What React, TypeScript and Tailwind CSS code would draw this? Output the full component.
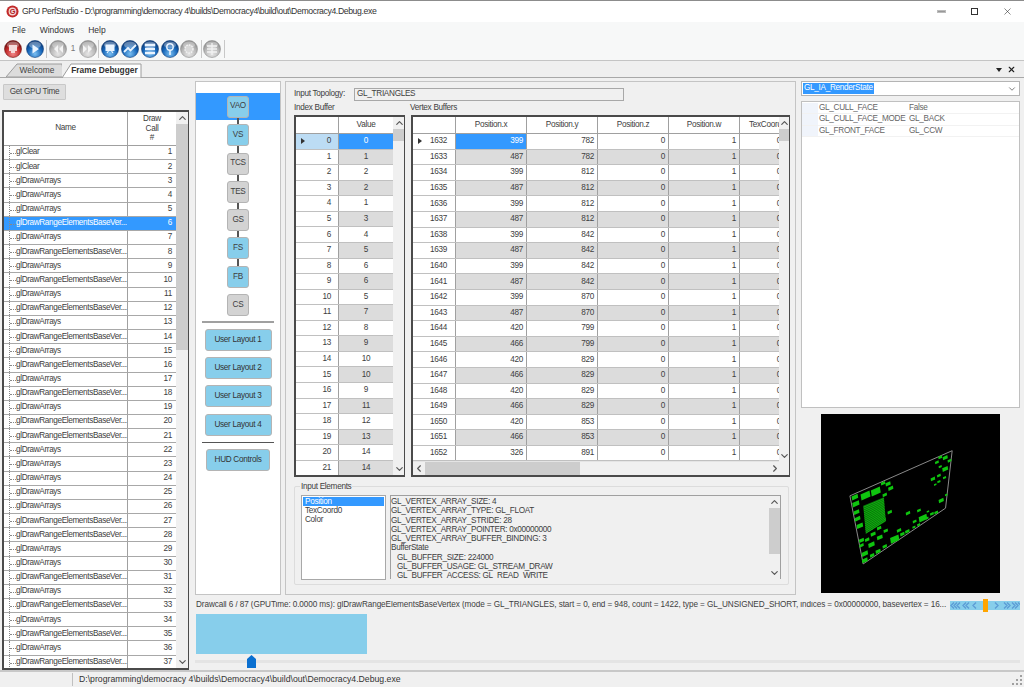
import React from "react";
import { ChevronUp, ChevronDown, ChevronLeft, ChevronRight, X } from "lucide-react";

const DA = "glDrawArrays";
const RE = "glDrawRangeElementsBaseVer...";
const calls = ["glClear","glClear",DA,DA,DA,RE,DA,RE,DA,RE,DA,RE,DA,RE,DA,RE,DA,RE,DA,RE,RE,DA,DA,DA,DA,DA,RE,RE,DA,DA,RE,DA,RE,DA,RE,DA,RE];
const indexValues = [0,1,2,2,1,3,4,5,6,6,5,7,8,9,10,10,9,11,12,13,14,14];
const vertices: [number, number, number][] = [
  [1632,399,782],[1633,487,782],[1634,399,812],[1635,487,812],[1636,399,812],[1637,487,812],[1638,399,842],
  [1639,487,842],[1640,399,842],[1641,487,842],[1642,399,870],[1643,487,870],[1644,420,799],[1645,466,799],
  [1646,420,829],[1647,466,829],[1648,420,829],[1649,466,829],[1650,420,853],[1651,466,853],[1652,326,891],
];
const pipeline: [string, boolean][] = [["VS",true],["TCS",false],["TES",false],["GS",false],["FS",true],["FB",true]];
const dots: [number, number, number][] = [
  [135,262,10],[138,282,11],[140,307,9],[143,327,9],[150,348,10],[220,220,7],[235,222,8],[243,235,8],[225,255,7],
  [240,307,7],[222,330,7],[208,355,7],[228,363,7],[190,373,8],[210,383,9],[172,390,7],[155,392,8],[155,407,7],
  [185,405,10],[225,410,7],[205,425,8],[187,437,7],[165,432,10],[165,452,9],[255,388,14],[268,362,7],[278,373,7],
  [293,365,7],[295,310,7],[328,302,6],[315,335,6],[313,352,5],[327,345,5],[340,325,13],[355,305,4],[352,325,5],
  [367,312,6],[380,308,6],[395,272,8],[410,255,4],[382,157,6],[392,142,6],[407,143,8],[420,152,6],[392,170,5],
  [407,177,9],[370,207,7],[388,197,6],[405,203,5],[388,215,5],[377,224,4],[178,357,11],[167,257,15],[198,245,15],
];

function Globe({ id, tone, children }: { id: string; tone: "red" | "blue" | "gray"; children?: React.ReactNode }) {
  const c = {
    red: ["#f08a8a", "#c42c2c", "#6d0f0f"],
    blue: ["#7cc0f2", "#1565b8", "#0b3a78"],
    gray: ["#e6e6e6", "#b9b9b9", "#8d8d8d"],
  }[tone];
  return (
    <svg viewBox="0 0 18 18" className="w-[18px] h-[18px] shrink-0">
      <defs>
        <radialGradient id={id} cx="50%" cy="78%" r="70%">
          <stop offset="0%" stopColor={c[0]} />
          <stop offset="60%" stopColor={c[1]} />
          <stop offset="100%" stopColor={c[2]} />
        </radialGradient>
      </defs>
      <circle cx="9" cy="9" r="8.5" fill={`url(#${id})`} stroke={c[2]} strokeWidth="0.6" />
      <ellipse cx="9" cy="5" rx="6" ry="3.4" fill="#ffffff" opacity="0.35" />
      {children}
    </svg>
  );
}

function Sep({ className }: { className: string }) {
  return <div className={`w-px h-[18px] bg-[#c8c8c8] shrink-0 ${className}`} />;
}

function VScroll({ thumbHeight, className }: { thumbHeight: number; className: string }) {
  return (
    <div className={`flex flex-col items-center bg-[#f0f0f0] shrink-0 ${className}`}>
      <ChevronUp className="w-[11px] h-[12px] text-[#555] shrink-0" strokeWidth={2.5} />
      <div className="flex-1 w-full">
        <div className="w-full bg-[#cdcdcd]" style={{ height: thumbHeight }} />
      </div>
      <ChevronDown className="w-[11px] h-[12px] text-[#555] shrink-0" strokeWidth={2.5} />
    </div>
  );
}

function Pipe({ label, on, line = true }: { label: string; on: boolean; line?: boolean }) {
  return (
    <div className="flex flex-col items-center">
      {line && <div className="w-[2px] h-[6.3px] bg-[#555]" />}
      <div className={`w-[22px] h-[22px] rounded-[3px] border border-[#b4b4b4] flex items-center justify-center text-[#404040] ${on ? "bg-[#87ceeb]" : "bg-[#d3d3d3]"}`}>{label}</div>
    </div>
  );
}

function LayoutBtn({ label, w = "w-[67px]" }: { label: string; w?: string }) {
  return (
    <div className={`${w} h-[22px] rounded-[3px] border border-[#b4b4b4] bg-[#87ceeb] flex items-center justify-center text-[#333]`}>{label}</div>
  );
}

export default function App() {
  return (
    <div className="w-[1024px] h-[687px] overflow-hidden flex flex-col bg-[#f0f0f0] text-[#404040] text-[8.2px] tracking-[-0.3px] leading-none font-['Liberation_Sans',Arial,sans-serif]">
      {/* Title bar */}
      <div className="h-[22px] bg-white flex items-center shrink-0 border-t border-[#8c8c8c]">
        <svg viewBox="0 0 14 14" className="w-[13px] h-[13px] ml-[6px] mr-[3px]">
          <circle cx="7" cy="7" r="6.5" fill="#c22a2a" />
          <circle cx="7" cy="7" r="4.2" fill="#f3d5d5" />
          <text x="7" y="10" textAnchor="middle" fontSize="8" fontWeight="700" fill="#b02020" fontFamily="Liberation Sans">G</text>
        </svg>
        <span className="text-[8.7px] tracking-[-0.4px] text-[#333] whitespace-nowrap">GPU PerfStudio - D:\programming\democracy 4\builds\Democracy4\build\out\Democracy4.Debug.exe</span>
        <div className="ml-auto flex items-center text-[#222]">
          <div className="w-[33px] flex justify-center"><div className="w-[7px] h-px bg-[#999] outline outline-[0.5px] outline-[#bbb]" /></div>
          <div className="w-[33px] flex justify-center"><div className="w-[7px] h-[7px] border border-[#333]" /></div>
          <div className="w-[33px] flex justify-center"><X className="w-[11px] h-[11px]" strokeWidth={1.2} /></div>
        </div>
      </div>
      {/* Menu */}
      <div className="h-[16px] bg-[#f7f8f8] flex items-center gap-[14px] pl-[12px] text-[8.5px] tracking-normal text-[#333] shrink-0">
        <span>File</span><span>Windows</span><span>Help</span>
      </div>
      {/* Toolbar */}
      <div className="h-[23px] flex shrink-0 bg-[#f7f8f8] border-b border-[#c4c4c4]">
        <div className="flex items-center pl-[4px]">
          <Globe id="g1" tone="red"><rect x="5" y="5" width="8" height="6" fill="#f4dada" /><rect x="7" y="11" width="4" height="2" fill="#f4dada" /></Globe>
          <div className="w-[4px]" />
          <Globe id="g2" tone="blue"><path d="M6.5 4.5 L13 9 L6.5 13.5 Z" fill="#eaf4ff" /></Globe>
          <Sep className="ml-[2px] mr-[2px]" />
          <Globe id="g3" tone="gray"><path d="M9 5 L5 9 L9 13 Z M14 5 L10 9 L14 13 Z" fill="#f4f4f4" /></Globe>
          <span className="w-[12px] text-center text-[#777]">1</span>
          <Globe id="g4" tone="gray"><path d="M4 5 L8 9 L4 13 Z M9 5 L13 9 L9 13 Z" fill="#f4f4f4" /></Globe>
          <Sep className="ml-[1px] mr-[2px]" />
          <Globe id="g5" tone="blue"><rect x="4.5" y="4.5" width="9" height="6.5" fill="#eaf4ff" /><path d="M6 13 L7.5 11 M12 13 L10.5 11" stroke="#eaf4ff" strokeWidth="1.2" /></Globe>
          <div className="w-[2px]" />
          <Globe id="g6" tone="blue"><path d="M3 12 L7 8 L9.5 10.5 L15 5" fill="none" stroke="#eaf4ff" strokeWidth="1.8" /></Globe>
          <div className="w-[2px]" />
          <Globe id="g7" tone="blue"><path d="M4 5 H14 M4 9 H14 M4 13 H14" stroke="#eaf4ff" strokeWidth="2.4" /></Globe>
          <div className="w-[2px]" />
          <Globe id="g8" tone="blue"><circle cx="9" cy="7" r="3.2" fill="none" stroke="#eaf4ff" strokeWidth="1.4" /><path d="M9 10 V15" stroke="#eaf4ff" strokeWidth="1.6" /></Globe>
          <div className="w-[1px]" />
          <Globe id="g9" tone="gray"><circle cx="9" cy="9" r="4" fill="#d8d8d8" stroke="#f2f2f2" strokeWidth="1.4" strokeDasharray="1.6 1" /></Globe>
          <Sep className="ml-[3px] mr-[1px]" />
          <Globe id="g10" tone="gray"><path d="M9 3 V15 M4 6 H14 M4 9 H14 M4 12 H14" stroke="#f2f2f2" strokeWidth="1.3" /></Globe>
          <Sep className="ml-[3px]" />
        </div>
      </div>
      {/* Tabs */}
      <div className="h-[17px] flex items-end pl-[6px] border-b border-[#a8a8a8] shrink-0 bg-[#efefef]">
        <div className="relative w-[56px] h-[14px] flex items-center justify-center pl-[6px]">
          <svg viewBox="0 0 56 14" className="absolute inset-0 w-full h-full" preserveAspectRatio="none">
            <path d="M0 14 L11 1 H56 L58 14 Z" fill="#dcdcdc" stroke="#9c9c9c" />
          </svg>
          <span className="relative text-[8.4px] tracking-normal text-[#444]">Welcome</span>
        </div>
        <div className="relative w-[80px] h-[15px] flex items-center justify-center pl-[5px] -mb-px">
          <svg viewBox="0 0 80 15" className="absolute inset-0 w-full h-full" preserveAspectRatio="none">
            <path d="M0 15 L9 1 H79 V15 Z" fill="#ffffff" stroke="#9c9c9c" />
          </svg>
          <span className="relative text-[8.4px] tracking-normal font-bold text-[#333]">Frame Debugger</span>
        </div>
        <div className="ml-auto flex items-center gap-[5px] pr-[8px] pb-[3px] text-[#222]">
          <div className="w-0 h-0 border-x-[3px] border-x-transparent border-t-[4px] border-t-[#222]" />
          <X className="w-[9px] h-[9px]" strokeWidth={3} />
        </div>
      </div>
      {/* Main */}
      <div className="flex flex-1 min-h-0">
        {/* Left */}
        <div className="w-[195px] shrink-0 flex flex-col">
          <div className="ml-[3px] mt-[6px] w-[63px] h-[16px] bg-[#dedede] border border-[#c8c8c8] rounded-[1px] flex items-center justify-center text-[#444] whitespace-nowrap">Get GPU Time</div>
          <div className="ml-[2px] mt-[10px] w-[187px] h-[560px] border-2 border-[#4a4a4a] border-r-[1px] flex bg-white overflow-hidden">
            <div className="w-[172px] shrink-0 flex flex-col">
              <div className="h-[34px] flex border-b border-[#a0a0a0] shrink-0">
                <div className="w-[124px] flex items-center justify-center border-r border-[#a0a0a0]">Name</div>
                <div className="flex-1 flex items-center justify-center text-center leading-[9.5px]">Draw<br />Call<br />#</div>
              </div>
              {calls.map((name, i) => (
                <div key={i} className={`h-[14.17px] shrink-0 flex border-b border-[#a8a8a8] ${i === 5 ? "bg-[#3399ff] text-white" : ""}`}>
                  <div className={`w-[124px] flex items-center pl-[12px] relative border-r whitespace-nowrap tracking-[-0.36px] overflow-hidden ${i === 5 ? "border-[#3399ff]" : "border-[#a0a0a0]"}`}>
                    <span className="absolute left-[5px] top-0 bottom-0 border-l border-dotted border-[#888]" />
                    <span className="absolute left-[6px] w-[6px] top-[7px] border-t border-dotted border-[#888]" />
                    {name}
                  </div>
                  <div className="flex-1 flex items-center justify-end pr-[4px]">{i + 1}</div>
                </div>
              ))}
            </div>
            <VScroll thumbHeight={226} className="w-[12px]" />
          </div>
        </div>
        {/* Right of left */}
        <div className="flex-1 min-w-0 flex flex-col">
          <div className="h-[517px] pt-[3px] flex shrink-0">
            {/* Pipeline */}
            <div className="w-[86px] shrink-0 bg-white border border-[#c4c4c4] flex flex-col items-center pt-[11px]">
              <div className="w-full h-[27px] bg-[#3399ff] flex items-center justify-center shrink-0">
                <Pipe label="VAO" on line={false} />
              </div>
              <div className="-mt-[2px] flex flex-col items-center">
                {pipeline.map(([l, on]) => <Pipe key={l} label={l} on={on} />)}
                <div className="h-[6.3px]" />
                <Pipe label="CS" on={false} line={false} />
              </div>
              <div className="w-[72px] h-[2px] bg-[#a0a0a0] mt-[5px] mb-[6px]" />
              <div className="flex flex-col gap-[6.2px]">
                <LayoutBtn label="User Layout 1" />
                <LayoutBtn label="User Layout 2" />
                <LayoutBtn label="User Layout 3" />
                <LayoutBtn label="User Layout 4" />
              </div>
              <div className="w-[72px] h-px bg-[#555] mt-[6px] mb-[6px]" />
              <LayoutBtn label="HUD Controls" w="w-[64px]" />
            </div>
            {/* Middle */}
            <div className="ml-[4px] w-[511px] shrink-0 border border-[#c4c4c4] bg-[#f0f0f0] flex flex-col pl-[8px] pr-[5px]">
              <div className="flex items-center mt-[6px] h-[13px]">
                <span className="w-[60px] whitespace-nowrap">Input Topology:</span>
                <div className="w-[270px] h-[13px] border border-[#a8a8a8] bg-[#f0f0f0] flex items-center pl-[2px]">GL_TRIANGLES</div>
              </div>
              <div className="flex mt-[2px] h-[11px] items-center">
                <span className="w-[116px]">Index Buffer</span>
                <span>Vertex Buffers</span>
              </div>
              <div className="flex mt-[1px] h-[362px] gap-[6px]">
                {/* Index */}
                <div className="w-[111px] h-full border-2 border-[#4a4a4a] border-r-[1px] flex bg-white overflow-hidden">
                  <div className="w-[97px] shrink-0 flex flex-col">
                    <div className="h-[17px] flex border-b border-[#a0a0a0] shrink-0">
                      <div className="w-[43px] border-r border-[#a0a0a0]" />
                      <div className="flex-1 flex items-center justify-center">Value</div>
                    </div>
                    {indexValues.map((v, i) => (
                      <div key={i} className="h-[15.57px] shrink-0 flex border-b border-[#c0c0c0]">
                        <div className={`w-[43px] flex items-center justify-end pr-[7px] relative border-r border-[#a0a0a0] ${i === 0 ? "bg-[#bcdcf4]" : ""}`}>
                          {i === 0 && <span className="absolute left-[5px] top-[4px] w-0 h-0 border-y-[3.5px] border-y-transparent border-l-[4px] border-l-[#333]" />}
                          {i}
                        </div>
                        <div className={`flex-1 flex items-center justify-center ${i === 0 ? "bg-[#3399ff] text-white" : i % 2 ? "bg-[#dcdcdc]" : ""}`}>{v}</div>
                      </div>
                    ))}
                  </div>
                  <VScroll thumbHeight={12} className="w-[12px]" />
                </div>
                {/* Vertex */}
                <div className="w-[379px] h-full border-2 border-[#4a4a4a] border-r-[1px] flex flex-col bg-white overflow-hidden">
                  <div className="flex-1 min-h-0 flex">
                    <div className="w-[366px] shrink-0 flex flex-col overflow-hidden">
                      <div className="h-[17px] flex border-b border-[#a0a0a0] shrink-0 whitespace-nowrap">
                        <div className="w-[43px] shrink-0 border-r border-[#a0a0a0]" />
                        {["Position.x","Position.y","Position.z","Position.w"].map(h => (
                          <div key={h} className="w-[71px] shrink-0 flex items-center justify-center border-r border-[#a0a0a0]">{h}</div>
                        ))}
                        <div className="w-[70px] shrink-0 flex items-center pl-[9px]">TexCoord0.x</div>
                      </div>
                      {vertices.map(([id, x, y], i) => (
                        <div key={id} className={`h-[15.6px] shrink-0 flex border-b border-[#c0c0c0] ${i % 2 ? "bg-[#dcdcdc]" : ""}`}>
                          <div className="w-[43px] shrink-0 bg-white flex items-center justify-end pr-[8px] relative border-r border-[#a0a0a0]">
                            {i === 0 && <span className="absolute left-[5px] top-[4px] w-0 h-0 border-y-[3.5px] border-y-transparent border-l-[4px] border-l-[#333]" />}
                            {id}
                          </div>
                          <div className={`w-[71px] shrink-0 flex items-center justify-end pr-[3px] border-r border-[#a0a0a0] ${i === 0 ? "bg-[#3399ff] text-white" : ""}`}>{x}</div>
                          {[y, 0, 1].map((val, k) => (
                            <div key={k} className="w-[71px] shrink-0 flex items-center justify-end pr-[3px] border-r border-[#a0a0a0]">{val}</div>
                          ))}
                          <div className="flex-1 flex items-center justify-end -mr-[2px] overflow-hidden">0</div>
                        </div>
                      ))}
                      <div className="flex-1 bg-[#e4e4e4]" />
                    </div>
                    <VScroll thumbHeight={12} className="w-[11px]" />
                  </div>
                  <div className="h-[13px] shrink-0 bg-[#f0f0f0] flex items-center">
                    <ChevronLeft className="w-[12px] h-[11px] text-[#555] shrink-0" strokeWidth={2.5} />
                    <div className="w-[155px] h-full bg-[#cdcdcd]" />
                    <div className="flex-1" />
                    <ChevronRight className="w-[12px] h-[11px] text-[#555] shrink-0 mr-[8px]" strokeWidth={2.5} />
                  </div>
                </div>
              </div>
              {/* Input elements */}
              <div className="relative mt-[9px] w-[495px] h-[99px] border border-[#dcdcdc] rounded-[2px] flex gap-[4px] pl-[6px] pt-[8px]">
                <span className="absolute -top-[4px] left-[5px] bg-[#f0f0f0] px-px">Input Elements</span>
                <div className="w-[85px] h-[85px] bg-white border border-[#a8a8a8] p-px flex flex-col">
                  <span className="h-[9.3px] bg-[#3399ff] text-white pl-[2px] flex items-center shrink-0">Position</span>
                  <span className="h-[9.3px] pl-[2px] flex items-center shrink-0">TexCoord0</span>
                  <span className="h-[9.3px] pl-[2px] flex items-center shrink-0">Color</span>
                </div>
                <div className="w-[391px] h-[84px] border border-[#a0a0a0] border-b-0 flex overflow-hidden">
                  <div className="flex-1 pt-px leading-[9.3px] whitespace-pre overflow-hidden">{"GL_VERTEX_ARRAY_SIZE: 4\nGL_VERTEX_ARRAY_TYPE: GL_FLOAT\nGL_VERTEX_ARRAY_STRIDE: 28\nGL_VERTEX_ARRAY_POINTER: 0x00000000\nGL_VERTEX_ARRAY_BUFFER_BINDING: 3\nBufferState\n   GL_BUFFER_SIZE: 224000\n   GL_BUFFER_USAGE: GL_STREAM_DRAW\n   GL_BUFFER_ACCESS: GL_READ_WRITE"}</div>
                  <VScroll thumbHeight={46} className="w-[11px]" />
                </div>
              </div>
            </div>
            {/* Right */}
            <div className="ml-[5px] w-[219px] shrink-0 flex flex-col">
              <div className="h-[15px] bg-white border border-[#b4b4b4] flex items-center pl-[1px]">
                <span className="bg-[#3399ff] text-white px-px h-[11px] flex items-center">GL_IA_RenderState</span>
                <ChevronDown className="ml-auto mr-[2px] w-[10px] h-[10px] text-[#666]" />
              </div>
              <div className="mt-[5px] h-[307px] bg-white border border-[#c0c0c0] text-[#666] flex flex-col pt-px">
                {[["GL_CULL_FACE","False"],["GL_CULL_FACE_MODE","GL_BACK"],["GL_FRONT_FACE","GL_CCW"]].map(([k, v]) => (
                  <div key={k} className="h-[11.4px] flex items-center border-b border-[#f2f2f2] whitespace-nowrap">
                    <div className="w-[16px] h-full bg-[#f0f4fb] shrink-0" />
                    <div className="w-[91px] pl-px shrink-0">{k}</div>
                    <div>{v}</div>
                  </div>
                ))}
              </div>
              <div className="mt-[6px] ml-[20px] w-[179px] h-[179px] bg-black">
                <svg viewBox="33 12 539 538" className="w-full h-full">
                  <path d="M120 258 L428 122 L408 295 L160 463 Z" fill="none" stroke="#8a8a8a" strokeWidth="3" />
                  {dots.map(([x, y, r], i) => (
                    <path key={i} d={`M${x - r} ${y - r * 0.2} L${x + r * 0.8} ${y - r} L${x + r} ${y + r * 0.2} L${x - r * 0.8} ${y + r} Z`} fill="#0fc40f" />
                  ))}
                  <path d="M160 288 L222 262 L228 335 L168 372 Z" fill="#0a6e0a" />
                  {Array.from({ length: 15 }).map((_, i) => (
                    <path key={i} d={`M${161 + i * 0.5} ${292 + i * 5.6} L${223 + i * 0.35} ${266 + i * 4.7}`} stroke="#12d812" strokeWidth="1.8" />
                  ))}
                </svg>
              </div>
            </div>
          </div>
          {/* Bottom */}
          <div className="flex items-center h-[18px] mt-[1px] shrink-0">
            <span className="whitespace-nowrap w-[754px] pl-[1px] overflow-hidden tracking-[-0.1px]">Drawcall 6 / 87 (GPUTime: 0.0000 ms): glDrawRangeElementsBaseVertex (mode = GL_TRIANGLES, start = 0, end = 948, count = 1422, type = GL_UNSIGNED_SHORT, indices = 0x00000000, basevertex = 16...</span>
            <div className="ml-[1px] w-[70px] h-[9px] bg-[#87ceeb] relative">
              <svg viewBox="0 0 70 9" className="w-full h-full">
                <path d="M4 1.5 L1 4.5 L4 7.5 M7 1.5 L4 4.5 L7 7.5 M10 1.5 L7 4.5 L10 7.5 M16 1.5 L13 4.5 L16 7.5 M19 1.5 L16 4.5 L19 7.5 M26 1.5 L23 4.5 L26 7.5 M45 1.5 L48 4.5 L45 7.5 M54 1.5 L57 4.5 L54 7.5 M57 1.5 L60 4.5 L57 7.5 M62 1.5 L65 4.5 L62 7.5 M65 1.5 L68 4.5 L65 7.5 M68 1.5 L70 3.5" fill="none" stroke="#5b9bd5" strokeWidth="1.3" />
              </svg>
              <span className="absolute left-[33px] -top-[2px] w-[5px] h-[13px] bg-[#ffa500]" />
            </div>
          </div>
          <div className="ml-[1px] w-[171px] h-[40px] bg-[#87ceeb] shrink-0" />
          <div className="relative mt-[6px] h-[3px] w-[825px] bg-[#e4e4e4] shrink-0">
            <svg viewBox="0 0 9 13" className="absolute left-[52px] -top-[5px] w-[9px] h-[13px]">
              <path d="M0 13 V4 L4.5 0 L9 4 V13 Z" fill="#0a6fd0" />
            </svg>
          </div>
        </div>
      </div>
      {/* Status */}
      <div className="h-[17px] border-t-2 border-[#c8c8c8] flex items-center shrink-0">
        <div className="w-px h-[13px] bg-[#c0c0c0] ml-[72px]" />
        <span className="ml-[6px] text-[8.7px] tracking-normal text-[#333]">D:\programming\democracy 4\builds\Democracy4\build\out\Democracy4.Debug.exe</span>
        <svg viewBox="0 0 10 10" className="ml-auto mr-[2px] w-[10px] h-[10px]">
          <path d="M8 0h2v2H8z M4 4h2v2H4z M8 4h2v2H8z M0 8h2v2H0z M4 8h2v2H4z M8 8h2v2H8z" fill="#a0a0a0" />
        </svg>
      </div>
    </div>
  );
}
